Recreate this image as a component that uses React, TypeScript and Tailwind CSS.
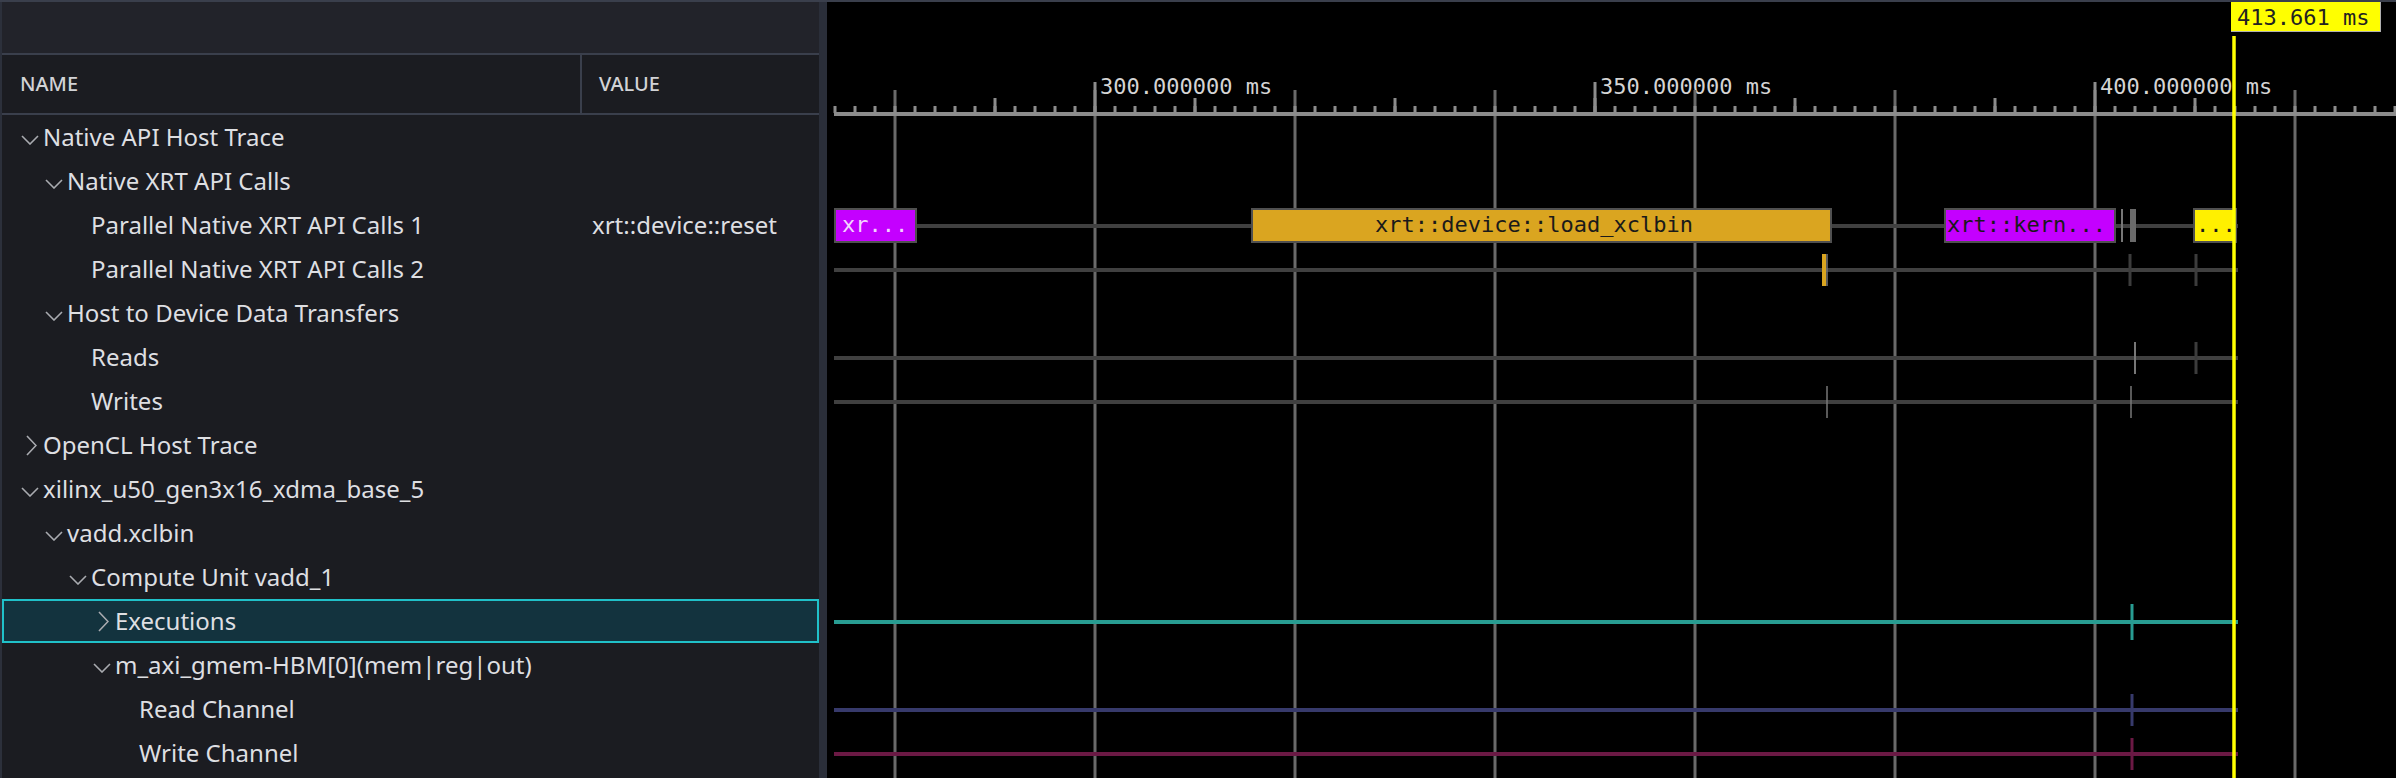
import React from 'react';

type Row = {
  name: string;
  level: number;
  kind: 'open' | 'closed' | 'leaf';
  value?: string;
  selected?: boolean;
};

const rows: Row[] = [
  { name: 'Native API Host Trace', level: 0, kind: 'open' },
  { name: 'Native XRT API Calls', level: 1, kind: 'open' },
  { name: 'Parallel Native XRT API Calls 1', level: 2, kind: 'leaf', value: 'xrt::device::reset' },
  { name: 'Parallel Native XRT API Calls 2', level: 2, kind: 'leaf' },
  { name: 'Host to Device Data Transfers', level: 1, kind: 'open' },
  { name: 'Reads', level: 2, kind: 'leaf' },
  { name: 'Writes', level: 2, kind: 'leaf' },
  { name: 'OpenCL Host Trace', level: 0, kind: 'closed' },
  { name: 'xilinx_u50_gen3x16_xdma_base_5', level: 0, kind: 'open' },
  { name: 'vadd.xclbin', level: 1, kind: 'open' },
  { name: 'Compute Unit vadd_1', level: 2, kind: 'open' },
  { name: 'Executions', level: 3, kind: 'closed', selected: true },
  { name: 'm_axi_gmem-HBM[0](mem|reg|out)', level: 3, kind: 'open' },
  { name: 'Read Channel', level: 4, kind: 'leaf' },
  { name: 'Write Channel', level: 4, kind: 'leaf' },
];

// indentation per tree level (chevron box starts here)
const indent = ['pl-[19px]', 'pl-[43px]', 'pl-[67px]', 'pl-[91px]', 'pl-[115px]'];
const indentSel = ['pl-[17px]', 'pl-[41px]', 'pl-[65px]', 'pl-[89px]', 'pl-[113px]'];

function Chevron({ kind }: { kind: Row['kind'] }) {
  if (kind === 'leaf') return <span className="w-[22px] shrink-0" />;
  if (kind === 'open') {
    return (
      <span className="w-[22px] shrink-0 flex items-center mt-[6px]">
        <svg width="18" height="10" viewBox="0 0 18 10">
          <polyline points="1,1 9,9 17,1" fill="none" stroke="#a9abb0" strokeWidth="1.6" />
        </svg>
      </span>
    );
  }
  return (
    <span className="w-[22px] shrink-0 flex items-center pl-[5px]">
      <svg width="11" height="21" viewBox="0 0 11 21">
        <polyline points="1,1 10,10.5 1,20" fill="none" stroke="#a9abb0" strokeWidth="1.6" />
      </svg>
    </span>
  );
}

function TreeRow({ row }: { row: Row }) {
  const base = 'h-[44px] shrink-0 flex items-center text-[24px] text-[#dedfe2] whitespace-nowrap';
  const cls = row.selected ? `${base} bg-[#13333e] border-2 border-[#20c1c9]` : base;
  const nameCls = row.selected
    ? `w-[588px] shrink-0 flex items-center ${indentSel[row.level]}`
    : `w-[590px] shrink-0 flex items-center ${indent[row.level]}`;
  return (
    <div className={cls}>
      <div className={nameCls}>
        <Chevron kind={row.kind} />
        <span>{row.name}</span>
      </div>
      {row.value && <span>{row.value}</span>}
    </div>
  );
}

// timeline: 10 px per ms, 300 ms at x = 1095 (page coordinates)
const minorTicks = Array.from({ length: 79 }, (_, i) => 835 + i * 20);
const midTicks = [995, 1195, 1395, 1595, 1795, 1995, 2195];
const gridLines = [895, 1095, 1295, 1495, 1695, 1895, 2095, 2295];
const labels = [
  { x: 1095, t: '300.000000 ms' },
  { x: 1595, t: '350.000000 ms' },
  { x: 2095, t: '400.000000 ms' },
];

const rowLines = [
  { y: 226, c: '#404040' },
  { y: 270, c: '#404040' },
  { y: 358, c: '#404040' },
  { y: 402, c: '#404040' },
  { y: 622, c: '#289c92' },
  { y: 710, c: '#373a6b' },
  { y: 754, c: '#6b1944' },
];

const marks = [
  { x: 2122, y1: 209, y2: 242, w: 2, c: '#777777' },
  { x: 2133, y1: 209, y2: 242, w: 6, c: '#6a6a6a' },
  { x: 1824, y1: 254, y2: 286, w: 4, c: '#daa520' },
  { x: 1827, y1: 254, y2: 286, w: 1.5, c: '#777777' },
  { x: 2130, y1: 254, y2: 286, w: 3, c: '#3c3c3c' },
  { x: 2196, y1: 254, y2: 286, w: 3, c: '#3c3c3c' },
  { x: 2135, y1: 342, y2: 374, w: 2, c: '#777777' },
  { x: 2196, y1: 342, y2: 374, w: 3, c: '#3c3c3c' },
  { x: 1827, y1: 386, y2: 418, w: 1.5, c: '#777777' },
  { x: 2131, y1: 386, y2: 418, w: 1.5, c: '#777777' },
  { x: 2132, y1: 604, y2: 640, w: 3, c: '#289c92' },
  { x: 2132, y1: 694, y2: 726, w: 3, c: '#373a6b' },
  { x: 2132, y1: 738, y2: 770, w: 3, c: '#6b1944' },
];

const bars = [
  { x1: 834, x2: 917, fill: '#c400ff', text: 'xr...', tx: 842, tc: '#f3d2ff' },
  { x1: 1251, x2: 1832, fill: '#daa520', text: 'xrt::device::load_xclbin', tx: 1375, tc: '#1a1a1a' },
  { x1: 1944, x2: 2116, fill: '#c400ff', text: 'xrt::kern...', tx: 1947, tc: '#1a1a1a' },
  { x1: 2193, x2: 2237, fill: '#fff000', text: '...', tx: 2196, tc: '#1a1a1a' },
];

function Timeline() {
  return (
    <svg
      width="1569"
      height="776"
      viewBox="827 2 1569 776"
      className="block font-['DejaVu_Sans_Mono',monospace] text-[22px]"
    >
      <rect x="827" y="2" width="1569" height="776" fill="#000" />
      {labels.map((l) => (
        <text key={l.t} x={l.x + 5} y="94" fill="#d4d4d4">
          {l.t}
        </text>
      ))}
      {gridLines.map((x) => (
        <line key={x} x1={x} x2={x} y1="90" y2="778" stroke="#6a6a6a" strokeWidth="3" />
      ))}
      {labels.map((l) => (
        <line key={l.x} x1={l.x} x2={l.x} y1="82" y2="114" stroke="#8c8c8c" strokeWidth="3" />
      ))}
      <line x1="834" x2="2396" y1="114" y2="114" stroke="#8c8c8c" strokeWidth="4" />
      {minorTicks.map((x) => (
        <line key={x} x1={x} x2={x} y1="106" y2="113" stroke="#8c8c8c" strokeWidth="3" />
      ))}
      {midTicks.map((x) => (
        <line key={x} x1={x} x2={x} y1="98" y2="113" stroke="#8c8c8c" strokeWidth="3" />
      ))}

      {rowLines.map((r) => (
        <line key={r.y} x1="834" x2="2238" y1={r.y} y2={r.y} stroke={r.c} strokeWidth="4" />
      ))}
      {marks.map((m, i) => (
        <line key={i} x1={m.x} x2={m.x} y1={m.y1} y2={m.y2} stroke={m.c} strokeWidth={m.w} />
      ))}
      {bars.map((b) => (
        <g key={b.x1}>
          <rect
            x={b.x1 + 1}
            y="209"
            width={b.x2 - b.x1 - 2}
            height="33"
            fill={b.fill}
            stroke="#505050"
            strokeWidth="2"
          />
          <text x={b.tx} y="232" fill={b.tc}>
            {b.text}
          </text>
        </g>
      ))}

      {/* cursor */}
      <line x1="2234" x2="2234" y1="36" y2="778" stroke="#ffff00" strokeWidth="3.5" />
      <rect x="2231" y="2" width="150" height="30" fill="#ffff00" />
      <line x1="2380.5" x2="2380.5" y1="2" y2="32" stroke="#b0b0b0" strokeWidth="1" />
      <line x1="2231" x2="2381" y1="31.5" y2="31.5" stroke="#b0b0b0" strokeWidth="1" />
      <text x="2237" y="25" fill="#222222">
        413.661 ms
      </text>
    </svg>
  );
}

export default function App() {
  return (
    <div className="w-[2396px] h-[778px] overflow-hidden flex flex-col bg-black">
      <div className="h-[2px] shrink-0 bg-[#3a3f4c]" />
      <div className="flex flex-1 min-h-0">
        {/* Tree panel */}
        <aside className="w-[819px] shrink-0 flex flex-col bg-[#1b1c21] border-l-2 border-[#2c303b] font-['Noto_Sans',sans-serif]">
          <div className="h-[53px] shrink-0 bg-[#22232a] border-b-2 border-[#3a3f4c]" />
          <div className="h-[60px] shrink-0 flex border-b-2 border-[#3a3f4c] text-[20px] font-medium text-[#d2d3d6]">
            <div className="w-[580px] shrink-0 border-r-2 border-[#3a3f4c] flex items-center pl-[18px]">
              NAME
            </div>
            <div className="flex items-center pl-[17px]">VALUE</div>
          </div>
          {rows.map((r) => (
            <TreeRow key={r.name} row={r} />
          ))}
        </aside>

        <div className="w-[8px] shrink-0 bg-[#2a2e39]" />

        {/* Timeline canvas */}
        <div className="flex-1 min-w-0">
          <Timeline />
        </div>
      </div>
    </div>
  );
}
